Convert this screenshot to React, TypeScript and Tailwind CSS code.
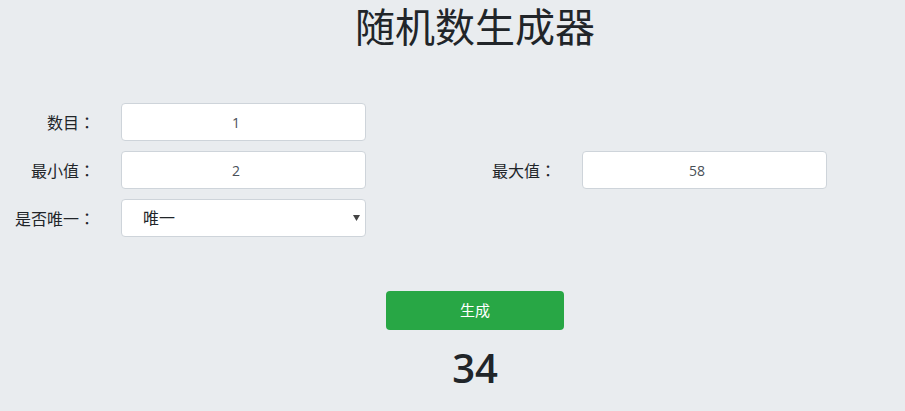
import { useState } from "react"

const fieldClassName =
  "h-[38px] w-[245px] rounded-[4px] border border-[#ced4da] bg-white text-center text-[14px] text-[#495057] outline-none"

function Row({ label, children }: { label: string; children: React.ReactNode }) {
  return (
    <div className="flex h-[38px] w-[461px] shrink-0 items-center">
      <label className="w-[113px] pr-[18px] text-right text-[16px] text-[#212529]">
        {label}
        <span style={{ fontFamily: '"Noto Sans CJK TC", sans-serif' }}>：</span>
      </label>
      <div className="ml-[8px]">{children}</div>
    </div>
  )
}

export default function App() {
  const [count, setCount] = useState("1")
  const [min, setMin] = useState("2")
  const [max, setMax] = useState("58")
  const [unique, setUnique] = useState("unique")

  return (
    <div
      className="min-h-[411px] w-full overflow-hidden bg-[#e9ecef]"
      style={{ fontFamily: '"Segoe UI", "Open Sans", "Noto Sans CJK SC", sans-serif' }}
    >
      <h1 className="pl-[45px] pt-[3px] text-center text-[40px] font-normal leading-[48px] text-[#212529]">
        随机数生成器
      </h1>

      <div className="mt-[52px] flex flex-col gap-[10px]">
        <Row label="数目">
          <input
            type="number"
            value={count}
            onChange={(e) => setCount(e.target.value)}
            className={fieldClassName}
          />
        </Row>
        <div className="flex">
          <Row label="最小值">
            <input
              type="number"
              value={min}
              onChange={(e) => setMin(e.target.value)}
              className={fieldClassName}
            />
          </Row>
          <Row label="最大值">
            <input
              type="number"
              value={max}
              onChange={(e) => setMax(e.target.value)}
              className={fieldClassName}
            />
          </Row>
        </div>
        <Row label="是否唯一">
          <div className="relative">
            <select
              value={unique}
              onChange={(e) => setUnique(e.target.value)}
              className="h-[38px] w-[245px] appearance-none rounded-[4px] border border-[#ced4da] bg-white pl-[21px] text-[16px] text-[#212529] outline-none"
            >
              <option value="unique">唯一</option>
              <option value="repeat">可重复</option>
            </select>
            <svg
              className="pointer-events-none absolute right-[6px] top-[16px]"
              width="7"
              height="6"
              viewBox="0 0 7 6"
            >
              <path d="M0 0 L7 0 L3.5 6 Z" fill="#444" />
            </svg>
          </div>
        </Row>
      </div>

      <div className="mt-[54px] flex justify-center pl-[45px]">
        <button className="h-[39px] w-[178px] rounded-[4px] bg-[#28a745] text-[15px] text-white">生成</button>
      </div>

      <div className="mt-[14px] pl-[45px] text-center text-[40px] font-semibold leading-[48px] text-[#212529]">
        34
      </div>
    </div>
  )
}
